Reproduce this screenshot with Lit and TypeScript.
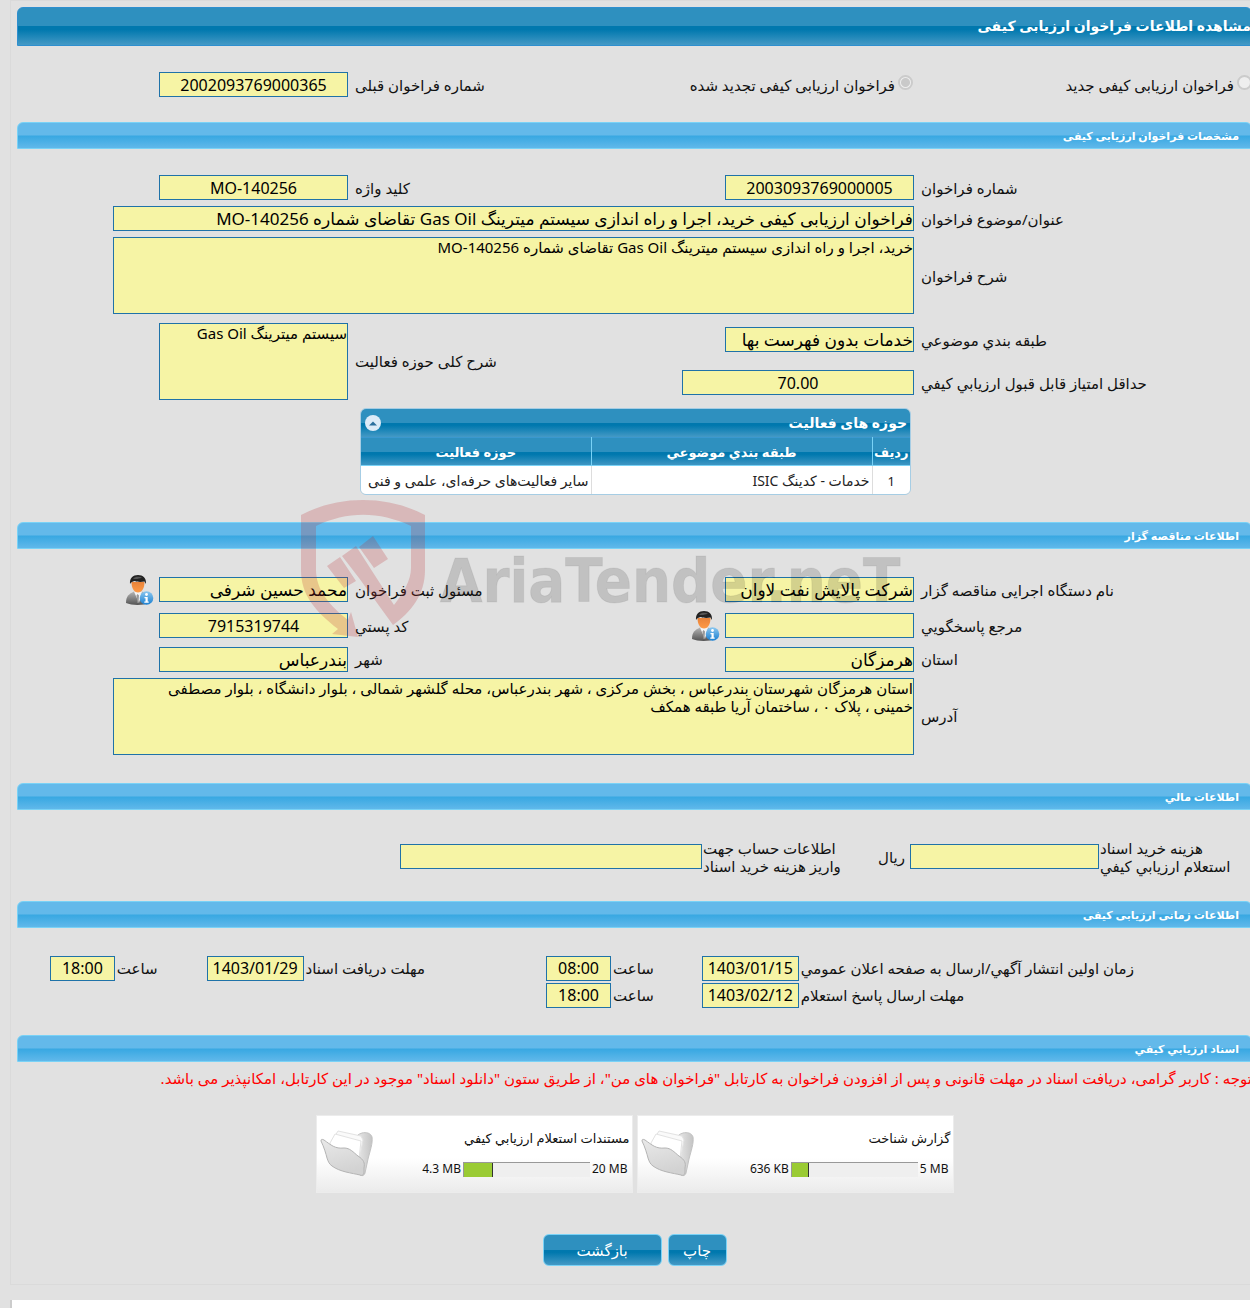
import { LitElement, html, css, svg } from "lit";
import { customElement, property } from "lit/decorators.js";
import { classMap } from "lit/directives/class-map.js";
import { styleMap } from "lit/directives/style-map.js";

const fieldStyles = css`
  * { box-sizing: border-box; }
  input, textarea, button { font-family: inherit; margin: 0; }
  .box {
    display: block;
    background: #f6f4a5;
    border: 1px solid #1f72a8;
    border-radius: 0;
    color: #000;
    padding: 0;
    outline: none;
  }
  input.box { width: 189px; height: 25px; font-size: 17px; line-height: 23px; flex: none; }
  textarea.box { height: 77px; font-size: 15px; line-height: 18px; resize: none; overflow: hidden; width: 100%; padding-left: 17px; }
  input.center { text-align: center; font-size: 16px; }
  label { white-space: nowrap; }
`;

const bars = css`
  .dark {
    background: linear-gradient(#2e90bf 0, #2e90bf 50%, #0078ae 50%, #0078ae 58%, #4499c5 100%);
    color: #fff;
    font-weight: bold;
  }
`;

@customElement("person-icon")
export class PersonIcon extends LitElement {
  static styles = css`:host { display: block; width: 30px; height: 32px; } svg { display: block; }`;
  render() {
    return html`<svg width="30" height="32" viewBox="0 0 30 32" aria-hidden="true">
      <defs>
        <linearGradient id="suit" x1="0" y1="0" x2="0" y2="1"><stop offset="0" stop-color="#b5b5b5"/><stop offset="1" stop-color="#555"/></linearGradient>
        <linearGradient id="face" x1="0" y1="0" x2="0" y2="1"><stop offset="0" stop-color="#e8833a"/><stop offset="1" stop-color="#ff9a45"/></linearGradient>
        <linearGradient id="info" x1="0" y1="0" x2="0" y2="1"><stop offset="0" stop-color="#8cc8f0"/><stop offset="1" stop-color="#1b7fd0"/></linearGradient>
      </defs>
      <path d="M1 29C1 22 4 20 9 17.500h8c5 2.500 7 5.500 7 11.500-6 2.500-17 2.500-23 0Z" fill="url(#suit)"/>
      <path d="M9 17.500 14 29l3-11.500Z" fill="#f4f4f4"/>
      <path d="M12.500 20l1.500 1.500-.5 7.500h-1l-1-7.500Z" fill="#999"/>
      <path d="M6.500 8c0 6 2.500 10.500 6.500 10.500s6.500-4.500 6.500-10.500Z" fill="url(#face)"/>
      <path d="M5 10C4.500 4 8 1 13 1s8.500 3 8 9l-1.500-2.500c-4 .8-8 .3-10-.5C7.500 7.500 6 8 5 10Z" fill="#222"/>
      <path d="M8 4.500C10 2.500 14 2 17 3.500 14 5 10 5.500 8 4.500Z" fill="#555"/>
      <circle cx="21.500" cy="24" r="6.800" fill="url(#info)"/>
      <circle cx="21.500" cy="20.500" r="1.400" fill="#fff"/>
      <path d="M19.500 23h3.200v4.500h1v1.300h-4.400v-1.300h1.200v-3.200h-1Z" fill="#fff"/>
    </svg>`;
  }
}

@customElement("section-bar")
export class SectionBar extends LitElement {
  static styles = css`
    :host { display: block; }
    h2 {
      box-sizing: border-box;
      margin: 0;
      height: 27px;
      padding: 0 12px 0 0;
      border: 1px solid #79d2f6;
      border-radius: 6px 6px 0 0;
      background: linear-gradient(#63b9ea 0, #63b9ea 48%, #38a8e2 52%, #60b8ea 100%);
      color: #fff;
      font-size: 11px;
      line-height: 26px;
      font-weight: bold;
    }
  `;
  render() {
    return html`<h2><slot></slot></h2>`;
  }
}

@customElement("file-card")
export class FileCard extends LitElement {
  @property() name = "";
  @property() limit = "";
  @property() used = "";
  @property({ type: Number }) percent = 0;

  static styles = css`
    :host {
      display: flex;
      justify-content: space-between;
      align-items: center;
      box-sizing: border-box;
      width: 317px;
      height: 78px;
      padding: 0 2px 0 3px;
      border: 1px solid #ececec;
      background: linear-gradient(#fff 55%, #ebebeb);
      font-size: 12px;
      line-height: 18px;
    }
    .info { display: grid; row-gap: 13px; }
    .name { font-size: 13px; }
    .usage { display: flex; align-items: center; direction: rtl; gap: 2px; padding-right: 2px; }
    .track { box-sizing: border-box; width: 127px; height: 15px; background: #efefef; border-top: 1px solid #999; border-left: 1px solid #999; direction: ltr; }
    .fill { box-sizing: border-box; height: 100%; background: #9acb34; border-right: 1px solid #333; }
    .folder { display: block; flex: none; }
  `;
  render() {
    return html`
      <div class="info">
        <div class="name">${this.name}</div>
        <div class="usage">
          <span dir="ltr">${this.limit}</span>
          <div class="track"><div class="fill" style=${styleMap({ width: `${this.percent}%` })}></div></div>
          <span dir="ltr">${this.used}</span>
        </div>
      </div>
      <svg class="folder" width="54" height="50" viewBox="0 0 54 50" aria-hidden="true">
        <defs>
          <linearGradient id="front" x1="0" y1="0" x2="0.300" y2="1"><stop offset="0" stop-color="#e9e9e9"/><stop offset="1" stop-color="#d2d2d2"/></linearGradient>
          <linearGradient id="back" x1="0" y1="0" x2="1" y2="0"><stop offset="0" stop-color="#f4f4f4"/><stop offset="1" stop-color="#c4c4c4"/></linearGradient>
        </defs>
        <path d="M33 11c3-3 5-6 9-7 4-1 9 0 10 4 1 6-2 14-4 22l-3 14c-1 3-3 3-5 2L32 30Z" fill="url(#back)" stroke="#c2c2c2"/>
        <path d="M12 12 18 2l23 5 2 4-5 26-24-8Z" fill="#fafafa" stroke="#e2e2e2"/>
        <path d="M10 14 15 5l26 7-3 27-24-8Z" fill="#fff" stroke="#e2e2e2"/>
        <path d="M1 12c0-2 1-2 3-1 7 5 11 9 20 8 6 0 9 4 14 8 6 4 7 7 6 12v4c0 3-2 4-4 3-8-2-20-3-28-9-3-2-4-5-5-8C6 25 4 18 1 12Z" fill="url(#front)" stroke="#b4b4b4"/>
      </svg>
    `;
  }
}

interface FieldOptions {
  center?: boolean;
  size?: "plain" | "wide" | "score" | "date" | "hour" | "account";
}

@customElement("app-root")
export class AppRoot extends LitElement {
  static styles = [
    fieldStyles,
    bars,
    css`
      :host {
        display: flex;
        flex-direction: column;
        min-height: 100vh;
        overflow: hidden;
        box-sizing: border-box;
        background: #e1e1e1;
        color: #111;
        direction: rtl;
        font-family: "Noto Sans", "DejaVu Sans", sans-serif;
        font-size: 15px;
        line-height: 18px;
      }
      .panel {
        margin: 0 -9px 15px 10px;
        padding: 6px 6px 18px 6px;
        border: 1px solid #dadada;
      }
      h1 {
        margin: 0;
        height: 39px;
        border: 1px solid #2e8fcf;
        border-radius: 6px 6px 0 0;
        font-size: 14px;
        line-height: 36px;
      }
      .form {
        display: grid;
        grid-template-columns: minmax(0, 338fr) minmax(0, 232fr) minmax(0, 334fr) minmax(0, 331fr);
        align-items: center;
        row-gap: 6px;
      }
      .form > label { text-align: left; padding-left: 7px; }
      .form > .choice { display: flex; align-items: center; gap: 3px; padding: 0 1px; }
      .choice.first { padding: 0; }
      .kind { padding: 26px 0 25px; }
      .specs { padding: 26px 0 4px; }
      .class { row-gap: 0; grid-auto-rows: 43px; }
      .class .tall { grid-area: 1 / 3 / 3 / 4; }
      .class .tallbox { grid-area: 1 / 4 / 3 / 5; }
      .wide { grid-column: 2 / 5; margin-left: 96px; }
      input.box.wide { width: auto; }
      input.box.score { width: 100%; }
      input.box.date { width: 97px; }
      input.box.hour { width: 65px; }
      input.box.account { width: 302px; }
      .narrow { width: 189px; }
      input[type="radio"] {
        appearance: none;
        width: 15px;
        height: 15px;
        margin-bottom: 4px;
        border: 2px solid #cbcbcb;
        border-radius: 50%;
        background: #eee;
      }
      input[type="radio"]:checked { background: radial-gradient(circle, #c9c9c9 0 4px, #eee 5px); }

      .activity {
        width: 551px;
        margin: 4px 341px 27px 0;
        border: 1px solid #a6cde4;
        border-radius: 6px;
        overflow: hidden;
        color: #222;
      }
      .activity .dark { border: 0; }
      .head { display: flex; justify-content: space-between; align-items: center; height: 28px; padding: 0 3px 0 4px; font-size: 14px; }
      .toggle { width: 16px; height: 16px; padding: 0; border: 0; border-radius: 50%; background: #dcebf8; display: grid; place-items: center; }
      table { width: 100%; border-collapse: collapse; table-layout: fixed; }
      th { height: 28px; padding: 0; font-size: 13px; border-left: 1px solid #79d2f6; border-bottom: 1px solid #79d2f6; border-top: 1px solid #3a98cf; }
      td { height: 28px; padding: 2px 2px 0; background: #fff; font-size: 14px; border-left: 1px solid #ddd; white-space: nowrap; }
      th:last-child, td:last-child { border-left: 0; }
      .num { width: 38px; }
      .topic { width: 281px; }
      td.num { text-align: center; font-size: 13px; }

      .organizer { position: relative; }
      .watermark { position: absolute; left: 23%; top: -22px; pointer-events: none; display: block; }
      .owner { padding: 26px 0 28px; row-gap: 6px; }
      .who { display: flex; align-items: center; gap: 4px; }
      .owner .who { height: 30px; }

      .finance {
        display: grid;
        grid-template-columns: minmax(0, 153fr) minmax(0, 257fr) minmax(0, 140fr) minmax(0, 685fr);
        align-items: center;
        padding: 29px 0 26px;
      }
      .finance label { text-align: left; padding-left: 1px; }
      .cost { display: flex; align-items: center; gap: 5px; }

      .times {
        display: grid;
        grid-template-columns: minmax(0, 454fr) minmax(0, 97fr) minmax(0, 91fr) minmax(0, 66fr) minmax(0, 242fr) minmax(0, 97fr) minmax(0, 92fr) minmax(0, 98fr);
        align-items: center;
        row-gap: 2px;
        padding: 28px 0 27px;
      }
      .times label { text-align: left; padding-left: 2px; }
      .times .box { justify-self: start; }

      .notice { margin: 0; padding: 7px 0 28px; color: #f00; white-space: nowrap; }
      .files { display: flex; justify-content: center; gap: 4px; }
      .actions { display: flex; justify-content: center; gap: 6px; padding-top: 41px; }
      .actions button {
        height: 32px;
        border: 1px solid #79d2f6;
        border-radius: 6px;
        font-size: 15px;
        font-weight: normal;
        padding: 0;
      }
      .print { width: 59px; }
      .back { width: 119px; }
      footer { flex: 1; min-height: 7px; margin-left: 10px; background: #fff; border-left: 2px solid #ccc; }
    `,
  ];

  private input(id: string, value = "", { center = false, size = "plain" }: FieldOptions = {}) {
    return html`<input id=${id} class=${classMap({ box: true, center, [size]: true })} type="text" readonly .value=${value} />`;
  }

  private pair(id: string, label: unknown, value = "", options: FieldOptions = {}) {
    return html`<label for=${id}>${label}</label>${this.input(id, value, options)}`;
  }

  private person(id: string, label: string, value = "") {
    return html`<label for=${id}>${label}</label>
      <div class="who">${this.input(id, value)}<person-icon></person-icon></div>`;
  }

  private time(id: string, label: string, date: string, hour: string) {
    return html`${this.pair(`${id}-date`, label, date, { center: true, size: "date" })}
    ${this.pair(`${id}-hour`, "ساعت", hour, { center: true, size: "hour" })}`;
  }

  private watermark() {
    return html`<svg class="watermark" width="640" height="140" viewBox="0 0 640 140" aria-hidden="true">
      ${svg`
        <g fill="#b92f36" fill-opacity="0.230">
          <path d="M0 15C38-5 86-5 124 15v55c0 25-14 42-32 55L58 78 41 56l14-10 16 25 22 34c10-13 17-25 17-37V26C78 11 46 11 15 26v44c0 20 14 36 32 50l3-8 7 25-26-3 6-5C14 111 0 95 0 70Z"/>
          <path d="M26 66 39 57l16 24-12 7ZM58 47l14-11 15 23-14 9Z"/>
        </g>
        <text x="139" y="102" fill="#000" fill-opacity="0.140" stroke="#000" stroke-opacity="0.060" font-family="DejaVu Sans Condensed, Noto Sans, sans-serif" font-weight="bold" font-size="61" direction="ltr">AriaTender.neT</text>`}
    </svg>`;
  }

  render() {
    return html`
      <main class="panel">
        <h1 class="dark">مشاهده اطلاعات فراخوان ارزیابی کیفی</h1>
        <div class="form kind">
          <div class="choice first"><input type="radio" name="kind" id="new" disabled /><label for="new">فراخوان ارزیابی کیفی جدید</label></div>
          <div class="choice"><input type="radio" name="kind" id="renewed" disabled checked /><label for="renewed">فراخوان ارزیابی کیفی تجدید شده</label></div>
          ${this.pair("previous", "شماره فراخوان قبلی", "2002093769000365", { center: true })}
        </div>

        <section>
          <section-bar>مشخصات فراخوان ارزیابی کیفی</section-bar>
          <div class="form specs">
            ${this.pair("number", "شماره فراخوان", "2003093769000005", { center: true })}
            ${this.pair("keyword", "کلید واژه", "MO-140256", { center: true })}
            ${this.pair("subject", "عنوان/موضوع فراخوان", "فراخوان ارزیابی کیفی خرید، اجرا و راه اندازی سیستم میترینگ Gas Oil تقاضای شماره MO-140256", { size: "wide" })}
            <label for="description">شرح فراخوان</label>
            <div class="wide"><textarea id="description" class="box" readonly .value=${"خرید، اجرا و راه اندازی سیستم میترینگ Gas Oil تقاضای شماره MO-140256"}></textarea></div>
          </div>
          <div class="form class">
            ${this.pair("category", "طبقه بندي موضوعي", "خدمات بدون فهرست بها")}
            <label class="tall" for="scope">شرح کلی حوزه فعالیت</label>
            <div class="tallbox narrow"><textarea id="scope" class="box" readonly .value=${"سیستم میترینگ Gas Oil"}></textarea></div>
            ${this.pair("score", "حداقل امتیاز قابل قبول ارزيابي کيفي", "70.00", { center: true, size: "score" })}
          </div>
          <div class="activity">
            <div class="head dark">
              <span>حوزه های فعالیت</span>
              <button class="toggle" type="button" aria-expanded="true" aria-labelledby="areas">
                <svg width="8" height="5" viewBox="0 0 8 5"><path d="M0 4.500 4 .5l4 4Z" fill="#2a6f9e" /></svg>
              </button>
            </div>
            <table id="areas">
              <thead>
                <tr class="dark"><th class="num">ردیف</th><th class="topic">طبقه بندي موضوعي</th><th>حوزه فعالیت</th></tr>
              </thead>
              <tbody>
                <tr><td class="num">1</td><td>خدمات - کدینگ ISIC</td><td>سایر فعالیت‌های حرفه‌ای، علمی و فنی</td></tr>
              </tbody>
            </table>
          </div>
        </section>

        <section class="organizer">
          <section-bar>اطلاعات مناقصه گزار</section-bar>
          <div class="form owner">
            ${this.pair("agency", "نام دستگاه اجرایی مناقصه گزار", "شرکت پالایش نفت لاوان")}
            ${this.person("registrar", "مسئول ثبت فراخوان", "محمد حسین شرفی")}
            ${this.person("contact", "مرجع پاسخگويي")}
            ${this.pair("postcode", "کد پستي", "7915319744", { center: true })}
            ${this.pair("province", "استان", "هرمزگان")}
            ${this.pair("city", "شهر", "بندرعباس")}
            <label for="address">آدرس</label>
            <div class="wide"><textarea id="address" class="box" readonly .value=${"استان هرمزگان شهرستان بندرعباس ، بخش مرکزی ، شهر بندرعباس، محله گلشهر شمالی ، بلوار دانشگاه ، بلوار مصطفی خمینی ، پلاک ۰ ، ساختمان آریا طبقه همکف"}></textarea></div>
          </div>
          ${this.watermark()}
        </section>

        <section>
          <section-bar>اطلاعات مالي</section-bar>
          <div class="finance">
            <label for="cost">هزینه خرید اسناد<br />استعلام ارزيابي کيفي</label>
            <div class="cost">${this.input("cost")}<span>ریال</span></div>
            ${this.pair("account", html`اطلاعات حساب جهت<br />واریز هزینه خرید اسناد`, "", { size: "account" })}
          </div>
        </section>

        <section>
          <section-bar>اطلاعات زمانی ارزیابی کیفی</section-bar>
          <div class="times">
            ${this.time("publish", "زمان اولین انتشار آگهي/ارسال به صفحه اعلان عمومي", "1403/01/15", "08:00")}
            ${this.time("receive", "مهلت دریافت اسناد", "1403/01/29", "18:00")}
            ${this.time("reply", "مهلت ارسال پاسخ استعلام", "1403/02/12", "18:00")}
          </div>
        </section>

        <section>
          <section-bar>اسناد ارزيابي کيفي</section-bar>
          <p class="notice">توجه : کاربر گرامی، دریافت اسناد در مهلت قانونی و پس از افزودن فراخوان به کارتابل "فراخوان های من"، از طریق ستون "دانلود اسناد" موجود در این کارتابل، امکانپذیر می باشد.</p>
          <div class="files">
            <file-card name="گزارش شناخت" limit="5 MB" used="636 KB" percent="14"></file-card>
            <file-card name="مستندات استعلام ارزيابي کيفي" limit="20 MB" used="4.3 MB" percent="23"></file-card>
          </div>
          <div class="actions">
            <button class="print dark" type="button">چاپ</button>
            <button class="back dark" type="button">بازگشت</button>
          </div>
        </section>
      </main>
      <footer></footer>
    `;
  }
}
